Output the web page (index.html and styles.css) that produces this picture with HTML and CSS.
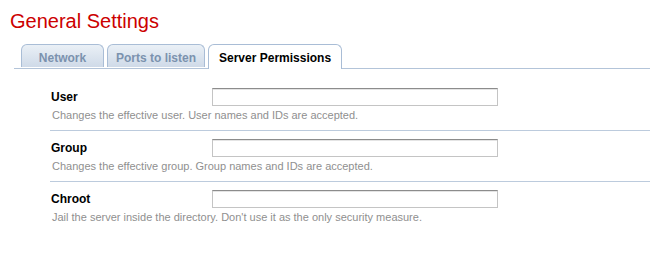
FILE: index.html
```html
<!DOCTYPE html>
<html lang="en">
<head>
  <meta charset="UTF-8">
  <title>General Settings</title>
  <link rel="stylesheet" href="styles.css">
</head>
<body>
  <h1>General Settings</h1>
  <ul class="tabs">
    <li><a href="#">Network</a></li>
    <li><a href="#">Ports to listen</a></li>
    <li class="active"><a href="#">Server Permissions</a></li>
  </ul>
  <form class="settings">
    <div class="row">
      <div class="line">
        <label for="user">User</label>
        <input type="text" id="user" name="user" />
      </div>
      <p class="help">Changes the effective user. User names and IDs are accepted.</p>
    </div>
    <div class="row">
      <div class="line">
        <label for="group">Group</label>
        <input type="text" id="group" name="group" />
      </div>
      <p class="help">Changes the effective group. Group names and IDs are accepted.</p>
    </div>
    <div class="row last">
      <div class="line">
        <label for="chroot">Chroot</label>
        <input type="text" id="chroot" name="chroot" />
      </div>
      <p class="help">Jail the server inside the directory. Don't use it as the only security measure.</p>
    </div>
  </form>
</body>
</html>
```
FILE: styles.css
```css
body {
  margin: 0;
  background: #fff;
  font-family: 'Liberation Sans', Arial, sans-serif;
  color: #000;
}
h1 {
  margin: 9px 0 0 10px;
  font-size: 20px;
  line-height: 24px;
  font-weight: normal;
  color: #cc0000;
}
.tabs {
  list-style: none;
  display: flex;
  gap: 3px;
  margin: 11px 0 0 14px;
  padding: 0 0 0 7px;
  border-bottom: 1px solid #b3c4d9;
  height: 24px;
}
.tabs li {
  min-width: 83px;
  height: 23px;
  box-sizing: border-box;
  border: 1px solid #a9bdd6;
  border-bottom: none;
  border-radius: 6px 6px 0 0;
  background: linear-gradient(#eaf0f6, #cfdae8);
  text-align: center;
}
.tabs li a {
  display: block;
  padding: 2px 8px 0;
  line-height: 22px;
  font-size: 12px;
  font-weight: bold;
  color: #7b92ae;
  text-decoration: none;
}
.tabs li.active {
  height: 25px;
  background: #fff;
}
.tabs li.active a {
  padding: 2px 10px 0;
  color: #000;
}
.settings {
  margin: 0 0 0 50px;
  padding-top: 11px;
}
.row {
  padding: 8px 0 8px 0;
  border-bottom: 1px solid #bccbdd;
}
.row.last {
  border-bottom: none;
}
.line {
  display: flex;
  align-items: center;
  height: 18px;
}
.line label {
  width: 162px;
  padding-left: 1px;
  box-sizing: border-box;
  font-size: 12px;
  font-weight: bold;
}
.line input {
  width: 286px;
  height: 18px;
  box-sizing: border-box;
  margin: 0;
  padding: 1px 3px;
  border: 1px solid #c4c4c4;
  border-top-color: #8c8c8c;
  box-shadow: inset 0 1px 0 #e4e4e4;
  background: #fff;
  font-size: 12px;
}
.help {
  margin: 2px 0 0 2px;
  font-size: 11px;
  line-height: 14px;
  color: #8f8f8f;
}
```
